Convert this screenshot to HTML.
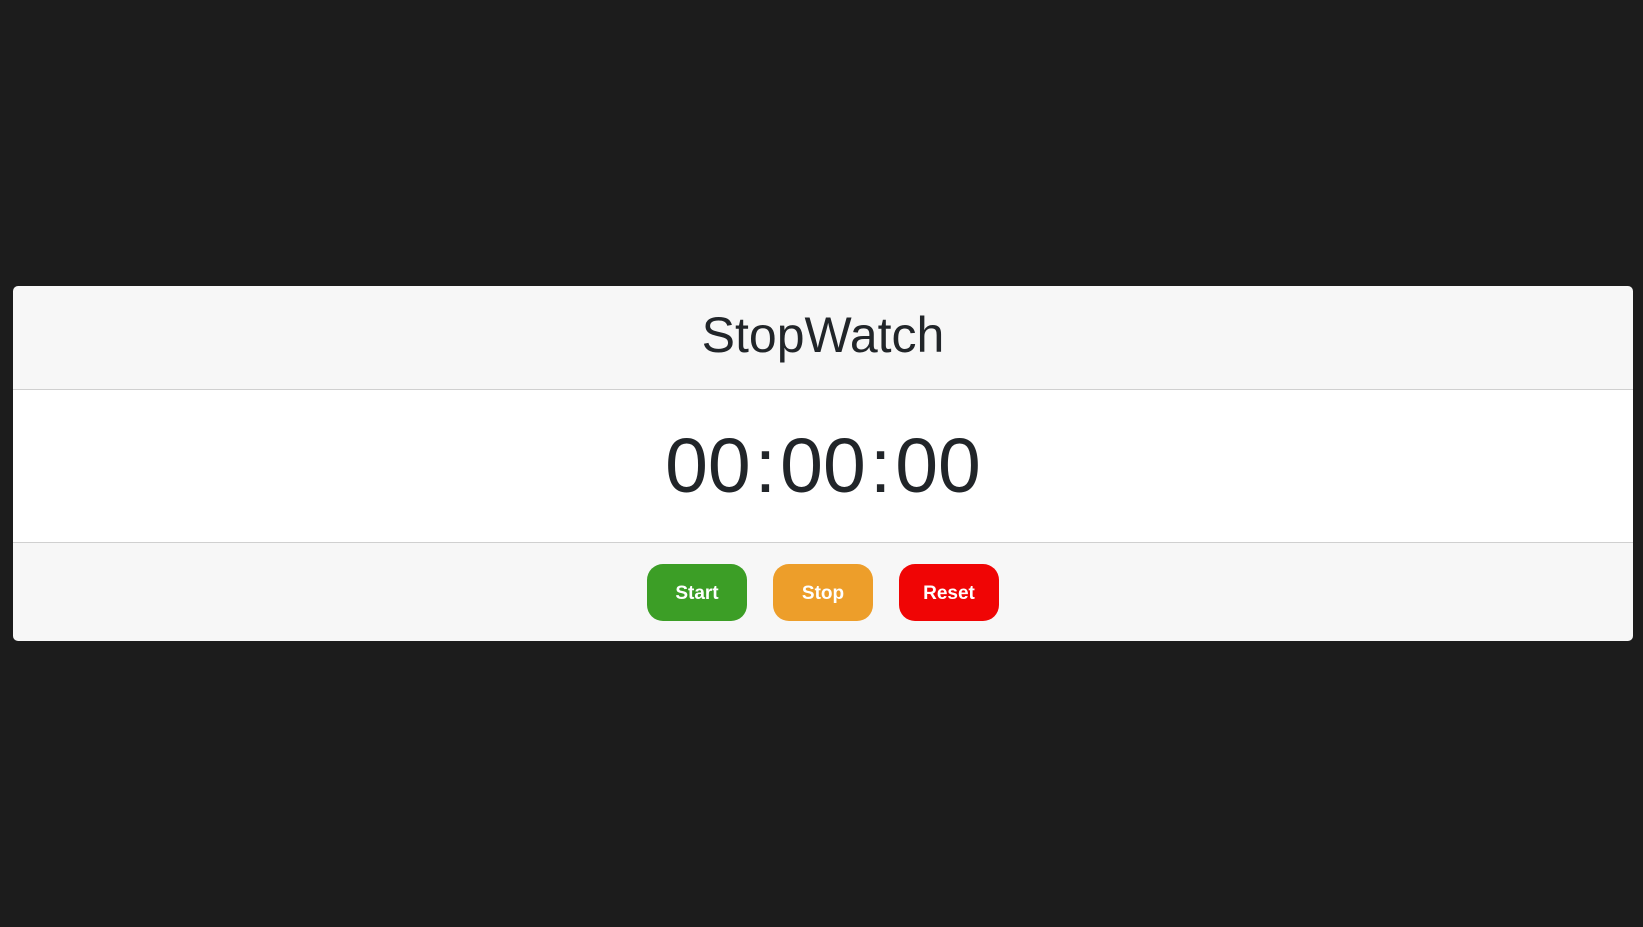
<!DOCTYPE html>
<html><head><style>
body{margin:0;background:#1c1c1c;width:1643px;height:927px;font-family:"Liberation Sans",sans-serif;position:relative;overflow:hidden}
.card{position:absolute;left:13px;top:286px;width:1620px;height:355px;background:#f7f7f7;border-radius:5px;overflow:hidden}
.hd{height:104px;border-bottom:1px solid #d0d0d0;text-align:center;color:#212529;font-size:50px;line-height:1;box-sizing:border-box;padding-top:24px}
.tm{height:153px;background:#fff;border-bottom:1px solid #d0d0d0;display:flex;justify-content:center;align-items:center;color:#212529;font-size:77px;box-sizing:border-box}
.tm span.c{margin:0 4px}
.bt{position:absolute;top:278px;height:57px;width:100px;border-radius:16px;color:#fff;font-weight:bold;font-size:19px;text-align:center;line-height:59px}
</style></head><body>
<div class="card">
<div class="hd">StopWatch</div>
<div class="tm"><span>00</span><span class="c">:</span><span>00</span><span class="c">:</span><span>00</span></div>
<div class="bt" style="left:634px;background:#3c9e26">Start</div>
<div class="bt" style="left:760px;background:#ed9e2a">Stop</div>
<div class="bt" style="left:886px;background:#f00505">Reset</div>
</div>
</body></html>
